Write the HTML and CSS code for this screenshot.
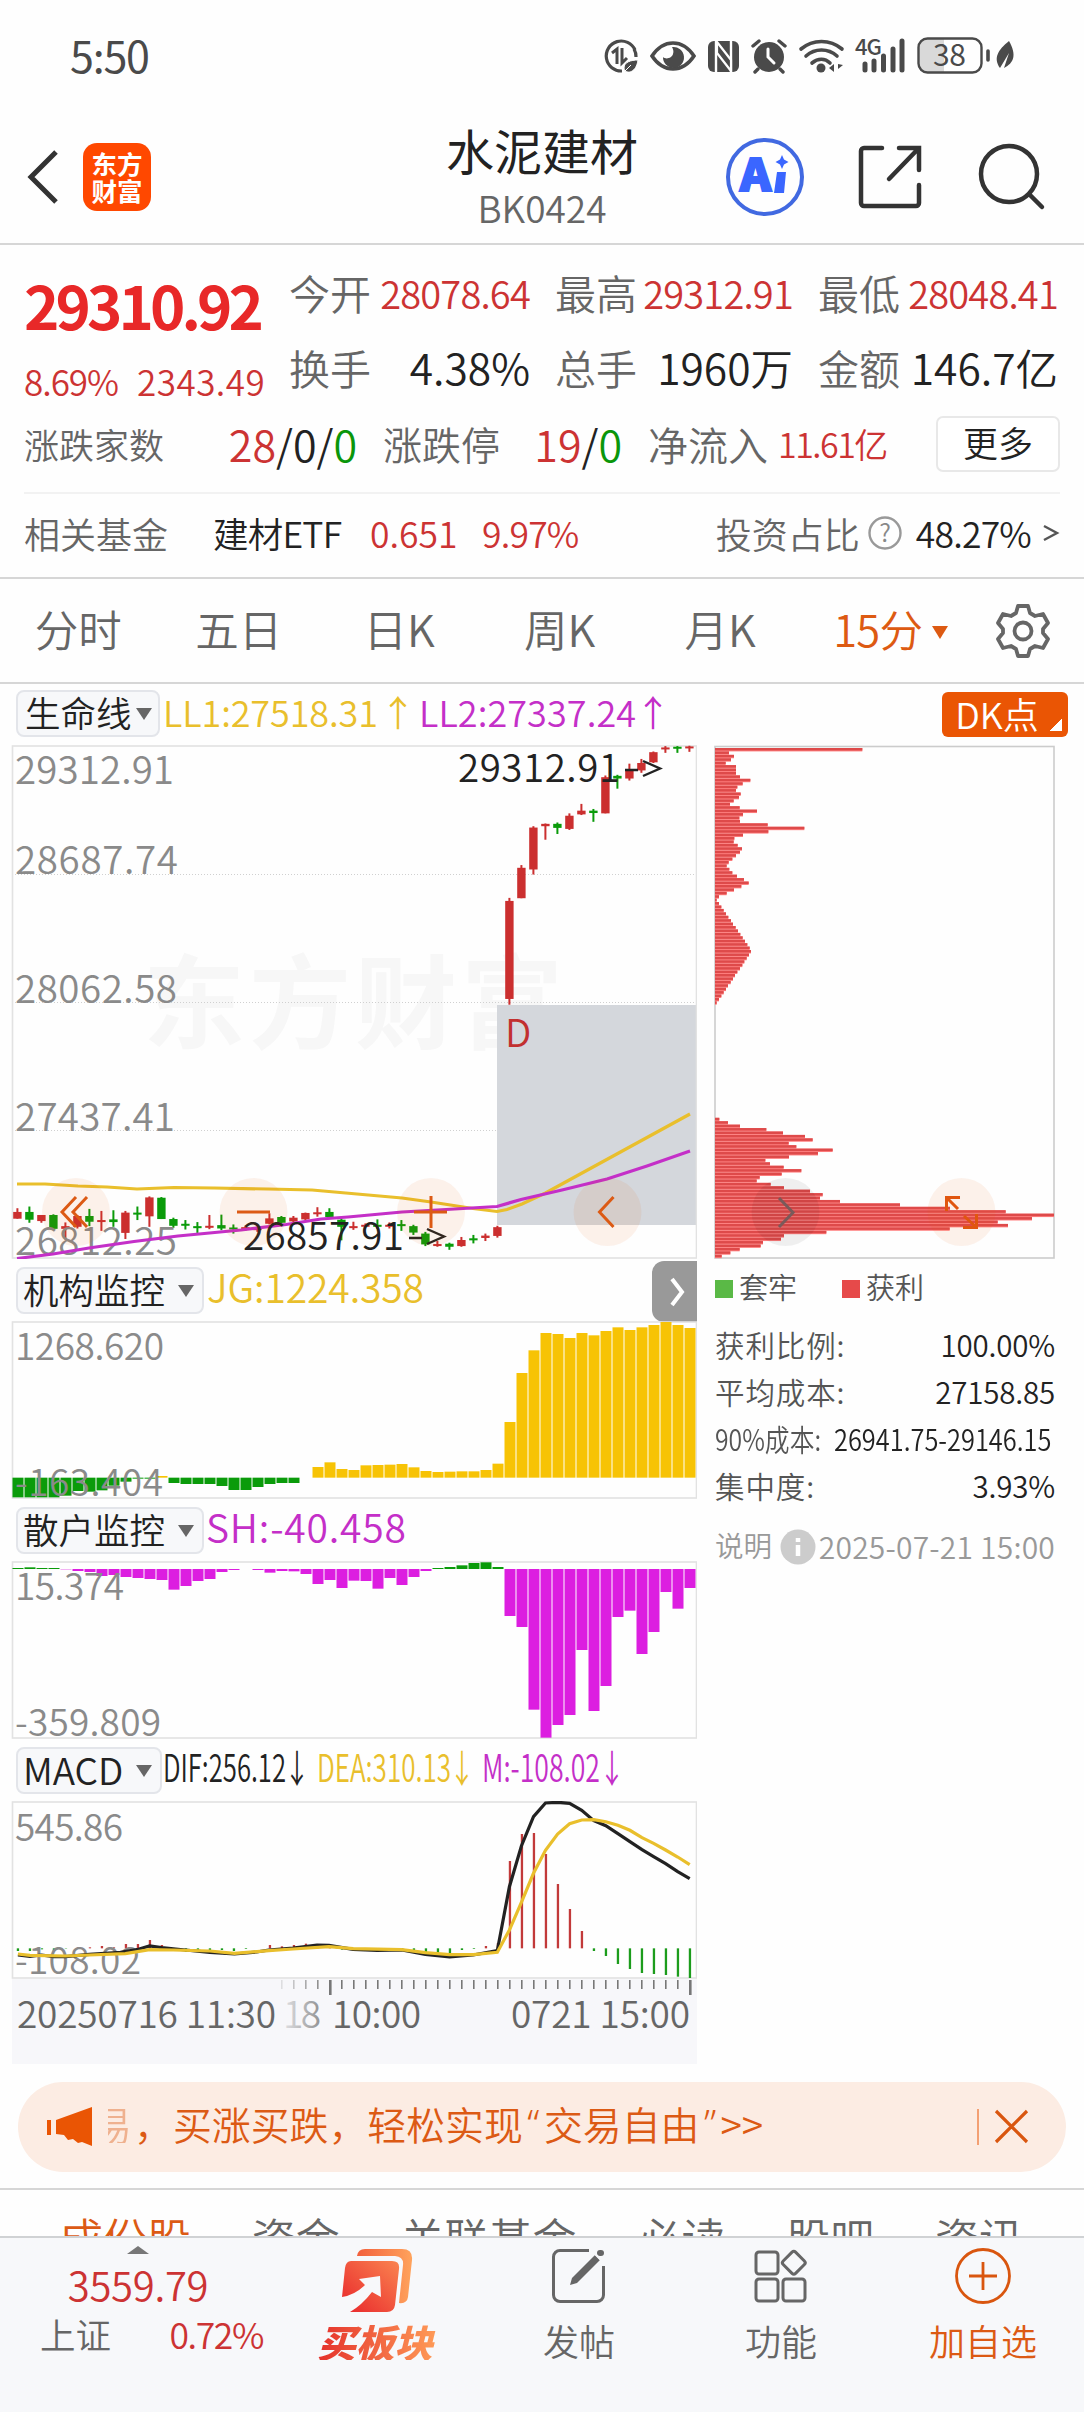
FILE: index.html
```html
<!DOCTYPE html>
<html lang="zh-CN">
<head>
    <meta charset="UTF-8">
    <meta name="viewport" content="width=device-width, initial-scale=1.0">
    <title>水泥建材 BK0424</title>
    <link rel="stylesheet" href="styles.css">
</head>
<body>
<div class="status-bar">
    <span class="time">5:50</span>
    <svg class="status-icons" width="430" height="40" viewBox="600 36 430 40">
        <!-- data saver -->
        <path d="M635 50a15 15 0 1 0-13 21" fill="none" stroke="#4a4a4a" stroke-width="3.2"/>
        <path d="M634 49a15 15 0 0 1 2 8" fill="none" stroke="#4a4a4a" stroke-width="3.2"/>
        <path d="M612 53l5-4v15M622 48v15l5-5" fill="none" stroke="#4a4a4a" stroke-width="3"/>
        <path d="M638 60c-7 0-14 2-14 8 0 6 12 7 14-8zM623 73l8-8" fill="#4a4a4a" stroke="#fff" stroke-width="1"/>
        <!-- eye -->
        <path d="M652 56c6-9 13-13 21-13s15 4 21 13c-6 9-13 13-21 13s-15-4-21-13z" fill="none" stroke="#4a4a4a" stroke-width="3.6"/>
        <path d="M672 47a10.500 10.500 0 1 1-9 10c3 3 9 1 10-3 1-3 0-5-1-7z" fill="#4a4a4a"/>
        <!-- nfc -->
        <rect x="708" y="41" width="31" height="31" rx="6" fill="#4a4a4a"/>
        <path d="M716 41v31M731 41v31" stroke="#fff" stroke-width="2.400"/>
        <path d="M717 42l14 18v11l-14-18z" fill="#4a4a4a" stroke="#fff" stroke-width="2.200"/>
        <!-- alarm -->
        <circle cx="769" cy="57" r="15" fill="#4a4a4a"/>
        <path d="M753 46l6-5M785 46l-6-5M758 69l-3 3M780 69l3 3" stroke="#4a4a4a" stroke-width="3.400" stroke-linecap="round"/>
        <path d="M768 49v8l6 6" fill="none" stroke="#fff" stroke-width="3" stroke-linecap="round"/>
        <!-- wifi -->
        <path d="M801 49c12-10 29-10 41 0M806 56c9-8 22-8 31 0M812 63c6-5 13-5 18 0" fill="none" stroke="#4a4a4a" stroke-width="3.600" stroke-linecap="round"/>
        <circle cx="821" cy="68" r="4.500" fill="#4a4a4a"/>
        <path d="M829 68l5-4v8zM835 64v8M838 64v8M838 69l5-4-5-1z" fill="#4a4a4a"/>
        <!-- signal -->
        <text class="net-type" x="855" y="55">4G</text>
        <path d="M865 64v6M874 61v9M883.500 56v14M893 49v21M902 41v29" stroke="#4a4a4a" stroke-width="5" stroke-linecap="round"/>
        <!-- battery -->
        <path d="M927 39h17v33h-17a8 8 0 0 1-8-8V47a8 8 0 0 1 8-8z" fill="#d9d9d9"/>
        <rect x="918.500" y="38.500" width="63" height="34" rx="9" fill="none" stroke="#4a4a4a" stroke-width="2.400"/>
        <path d="M988 51v9" stroke="#4a4a4a" stroke-width="3.600" stroke-linecap="round"/>
        <text class="battery-text" x="933" y="66" textLength="33">38</text>
        <path d="M1009 41c8 14 5 22-5 27l5-15-9 15c-7-10-2-18 9-27z" fill="#4a4a4a"/>
    </svg>
</div>

<header>
    <div class="header-left">
        <svg width="34" height="60" viewBox="0 0 34 60"><path d="M30 5L5 30l25 25" fill="none" stroke="#333" stroke-width="5"/></svg>
        <div class="logo"><span>东方</span><span>财富</span></div>
    </div>
    <div class="title">
        <h1>水泥建材</h1>
        <p>BK0424</p>
    </div>
    <div class="header-right">
        <svg width="80" height="80" viewBox="0 0 80 80">
            <circle cx="40" cy="40" r="37" fill="none" stroke="#4169e1" stroke-width="4"/>
            <text class="ai-text" x="15" y="54" textLength="31" lengthAdjust="spacingAndGlyphs">A</text>
            <path d="M52 35h9l-2 21h-10zM57 18l2 4.500 4.500 2.500-4.500 2.500L57 32l-2-4.500-4.500-2.500 4.500-2.500z" fill="#3a66ff"/>
        </svg>
        <svg width="68" height="68" viewBox="0 0 68 68">
            <path d="M26 5H8a3 3 0 0 0-3 3v52a3 3 0 0 0 3 3h52a3 3 0 0 0 3-3V42M43 5h20v22M62 6L33 36" fill="none" stroke="#333" stroke-width="4.500" stroke-linecap="round"/>
        </svg>
        <svg width="70" height="70" viewBox="0 0 70 70">
            <circle cx="32" cy="31" r="28" fill="none" stroke="#333" stroke-width="4.500"/>
            <path d="M53 52l12 12" stroke="#333" stroke-width="4.500" stroke-linecap="round"/>
        </svg>
    </div>
</header>

<section class="quote">
    <div class="quote-top">
        <div class="price">
            <div class="last">29310.92</div>
            <div class="change"><span>8.69%</span><span class="amount">2343.49</span></div>
        </div>
        <div class="stats">
            <div class="stat"><label>今开</label><span class="num red">28078.64</span></div>
            <div class="stat"><label>最高</label><span class="num red">29312.91</span></div>
            <div class="stat"><label>最低</label><span class="num red">28048.41</span></div>
            <div class="stat"><label>换手</label><span class="big">4.38%</span></div>
            <div class="stat"><label>总手</label><span class="big">1960万</span></div>
            <div class="stat"><label>金额</label><span class="big">146.7亿</span></div>
        </div>
    </div>
    <div class="breadth">
        <label class="small">涨跌家数</label>
        <span class="counts up-down"><i class="red">28</i>/0/<i class="green">0</i></span>
        <label>涨跌停</label>
        <span class="counts limits"><i class="red">19</i>/<i class="green">0</i></span>
        <label class="flow-label">净流入</label>
        <span class="flow red">11.61亿</span>
        <button class="more-btn">更多</button>
    </div>
    <div class="fund">
        <label>相关基金</label>
        <span class="fund-name">建材ETF</span>
        <span class="fund-num red">0.651</span>
        <span class="fund-pct red">9.97%</span>
        <label class="ratio-label">投资占比</label>
        <svg width="34" height="34" viewBox="0 0 34 34">
            <circle cx="17" cy="17" r="15.500" fill="none" stroke="#999" stroke-width="2.400"/>
            <text class="help-mark" x="17" y="26">?</text>
        </svg>
        <span class="ratio">48.27%</span>
        <svg class="go" width="18" height="20" viewBox="0 0 18 20"><path d="M2 3l13 7-13 7" fill="none" stroke="#555" stroke-width="2.400"/></svg>
    </div>
</section>

<nav class="periods">
    <a>分时</a>
    <a>五日</a>
    <a>日K</a>
    <a>周K</a>
    <a>月K</a>
    <a class="active">15分<span class="caret"></span></a>
    <svg width="56" height="56" viewBox="0 0 56 56">
        <path d="M23 3h10l2 7 5 3 8-2 5 9-5 6v4l5 6-5 9-8-2-5 3-2 7H23l-2-7-5-3-8 2-5-9 5-6v-4l-5-6 5-9 8 2 5-3z" fill="none" stroke="#666" stroke-width="3.800" stroke-linejoin="round"/>
        <circle cx="28" cy="28" r="8.500" fill="none" stroke="#666" stroke-width="3.800"/>
    </svg>
</nav>

<div class="indicator main-indicator">
    <button class="pick short">生命线<span class="caret"></span></button>
    <svg class="readout" width="520" height="46" viewBox="160 690 520 46">
        <text class="yellow" x="163" y="727" textLength="215">LL1:27518.31</text>
        <text class="magenta" x="419" y="727" textLength="217">LL2:27337.24</text>
        <text class="yellow" x="380" y="727">↑</text>
        <text class="magenta" x="635" y="727">↑</text>
    </svg>
    <button class="dk-btn">DK点</button>
</div>

<div class="charts">
    <div class="chart-left">
        <svg id="kline" width="697" height="514" viewBox="0 745 697 514">
            <text class="watermark" x="143" y="1041" textLength="420">东方财富</text>
            <path class="grid" d="M12 874.500H696M12 1002.500H696M12 1130.500H696"/>
            <rect x="497" y="1005" width="199" height="220" fill="#d4d7dc"/>
            <rect class="frame" x="12.500" y="746" width="684" height="512"/>
            <g id="candles"></g>
            <g class="axis">
                <text x="15" y="784" textLength="159">29312.91</text>
                <text x="15" y="874" textLength="163">28687.74</text>
                <text x="15" y="1003" textLength="162">28062.58</text>
                <text x="15" y="1131" textLength="160">27437.41</text>
                <text x="15" y="1255" textLength="162">26812.25</text>
            </g>
            <path class="line yellow-line" d="M17 1184L45 1184 78 1186 107 1187 137 1189 174 1187.500 214 1188 268 1189 312 1190 357 1194 402 1198 431 1202 473 1208.500 497 1211.500 507 1209.500 522 1204 545.500 1193 690 1114"/>
            <path class="line magenta-line" d="M17 1258.500L53 1254 89 1248 134 1241.500 178 1236 241 1230 286 1224.500 321 1219 348 1217 402 1212 446 1209.500 497 1206.500 521 1199.500 562 1190 607 1179 647 1166 690 1151"/>
            <text class="mark-d" x="505" y="1047">D</text>
            <g class="extreme">
                <text x="458" y="782" textLength="162">29312.91</text>
                <path d="M625 770h13M643 761l17 7.500-17 7.500"/>
                <text x="243" y="1250" textLength="161">26857.91</text>
                <path d="M409 1238h13M427 1229l17 7.500-17 7.500"/>
            </g>
            <g class="tool">
                <circle cx="76" cy="1212" r="34"/>
                <circle cx="253.500" cy="1212" r="34"/>
                <circle cx="431" cy="1212" r="34"/>
                <circle cx="607.500" cy="1212" r="34"/>
                <path d="M76 1197l-14 15 14 15M87 1197l-14 15 14 15M237 1212h33M414 1212h33M431 1196v32M613.500 1197l-14 15 14 15"/>
            </g>
        </svg>

        <div class="indicator">
            <button class="pick">机构监控<span class="caret"></span></button>
            <svg class="readout" width="400" height="46" viewBox="205 1268 400 46">
                <text class="yellow big-read" x="208" y="1304" textLength="217">JG:1224.358</text>
            </svg>
            <button class="collapse">
                <svg width="20" height="34" viewBox="0 0 20 34"><path d="M4 4l10 13L4 30" fill="none" stroke="#fff" stroke-width="4"/></svg>
            </button>
        </div>
        <svg width="697" height="178" viewBox="0 1321 697 178">
            <rect class="frame" x="12.500" y="1322" width="684" height="176"/>
            <g id="org-bars"></g>
            <g class="axis sub">
                <text x="15" y="1360" textLength="149">1268.620</text>
                <text x="15" y="1496" textLength="148">-163.404</text>
            </g>
        </svg>

        <div class="indicator">
            <button class="pick">散户监控<span class="caret"></span></button>
            <svg class="readout" width="400" height="46" viewBox="205 1508 400 46">
                <text class="magenta big-read" x="207" y="1544" textLength="200">SH:-40.458</text>
            </svg>
        </div>
        <svg width="697" height="178" viewBox="0 1561 697 178">
            <rect class="frame" x="12.500" y="1562" width="684" height="176"/>
            <g id="retail-bars"></g>
            <g class="axis sub">
                <text x="15" y="1600" textLength="109">15.374</text>
                <text x="15" y="1736" textLength="146">-359.809</text>
            </g>
        </svg>

        <div class="indicator">
            <button class="pick macd">MACD<span class="caret"></span></button>
            <svg class="readout" width="500" height="46" viewBox="164 1748 500 46">
                <text class="black tight" x="165" y="1783" textLength="123" lengthAdjust="spacingAndGlyphs">DIF:256.12</text>
                <text class="yellow tight" x="319" y="1783" textLength="134" lengthAdjust="spacingAndGlyphs">DEA:310.13</text>
                <text class="magenta tight" x="484" y="1783" textLength="118" lengthAdjust="spacingAndGlyphs">M:-108.02</text>
                <text class="black tight" x="286" y="1783" textLength="26" lengthAdjust="spacingAndGlyphs">↓</text>
                <text class="yellow tight" x="451" y="1783" textLength="26" lengthAdjust="spacingAndGlyphs">↓</text>
                <text class="magenta tight" x="601" y="1783" textLength="26" lengthAdjust="spacingAndGlyphs">↓</text>
            </svg>
        </div>
        <svg width="697" height="263" viewBox="0 1801 697 263">
            <defs>
                <linearGradient id="fade" x1="0" x2="1" y1="0" y2="0">
                    <stop offset="0" stop-color="#666" stop-opacity=".15"/>
                    <stop offset="1" stop-color="#666" stop-opacity=".7"/>
                </linearGradient>
            </defs>
            <rect x="12" y="1979" width="685" height="85" fill="#f7f7fa"/>
            <rect class="frame" x="12.500" y="1802" width="684" height="176"/>
            <g id="macd-bars"></g>
            <g class="axis sub">
                <text x="15" y="1841" textLength="108">545.86</text>
                <text x="15" y="1974" textLength="126">-108.02</text>
            </g>
            <polyline class="line" id="dif-line" stroke="#222"/>
            <polyline class="line yellow-line" id="dea-line"/>
            <g id="ticks"></g>
            <g class="dates">
                <text x="17" y="2028" textLength="259">20250716 11:30</text>
                <text x="283" y="2028" textLength="38" fill="url(#fade)">18</text>
                <text x="332" y="2028" textLength="89">10:00</text>
                <text x="511" y="2028" textLength="179">0721 15:00</text>
            </g>
        </svg>
    </div>

    <div class="chart-right">
        <svg width="370" height="514" viewBox="697 745 370 514">
            <rect x="715" y="746.500" width="339" height="511.500" fill="none" stroke="#ccc" stroke-width="1.600"/>
            <g id="chips"></g>
            <circle cx="785.500" cy="1212" r="34" fill="#000" fill-opacity=".06"/>
            <circle cx="961.500" cy="1212" r="34" fill="#ea5504" fill-opacity=".08"/>
            <path d="M779 1198l14 14.500-14 14.500" fill="none" stroke="#7a5a5a" stroke-width="3"/>
            <path d="M960 1197.500H946.500V1211M947 1198l11 11M963 1227.500h13.500V1214M976 1227l-12-11" fill="none" stroke="#e0560f" stroke-width="3"/>
        </svg>
        <div class="legend">
            <i class="trapped"></i><span>套牢</span>
            <i class="profit"></i><span>获利</span>
        </div>
        <div class="chip-row"><label>获利比例:</label><b>100.00%</b></div>
        <div class="chip-row"><label>平均成本:</label><b>27158.85</b></div>
        <div class="chip-row narrow"><label>90%成本:</label><b>26941.75-29146.15</b></div>
        <div class="chip-row"><label>集中度:</label><b>3.93%</b></div>
        <div class="chip-note">
            <span>说明</span>
            <svg width="36" height="36" viewBox="0 0 36 36">
                <circle cx="18" cy="18" r="17.500" fill="#ccc"/>
                <path d="M18 9v4M18 16v11" stroke="#fff" stroke-width="4.500"/>
            </svg>
            <span class="date">2025-07-21 15:00</span>
        </div>
    </div>
</div>

<div class="promo">
    <svg width="46" height="40" viewBox="0 0 46 40"><path d="M0 13h4v15H0zM9 13L45 0v39l-10-4-4 1-5-4-5 1-4-5-8-1z" fill="#ea5504"/></svg>
    <p><span class="fading">易</span><span class="comma">，</span>买涨买跌，轻松实现<span class="q">“</span>交易自由<span class="q">”</span>&gt;&gt;</p>
    <svg class="close" width="54" height="40" viewBox="0 0 54 40">
        <path d="M1 2v36" stroke="#ea5504" stroke-width="1"/>
        <path d="M19 4l31 31M50 4L19 35" stroke="#d9560f" stroke-width="3.200"/>
    </svg>
</div>

<div class="sections">
    <a class="active">成份股</a>
    <a>资金</a>
    <a>关联基金</a>
    <a>必读</a>
    <a>股吧</a>
    <a>资讯</a>
</div>

<footer>
    <div class="index">
        <span class="arrow-up"></span>
        <div class="index-value">3559.79</div>
        <div class="index-row"><span>上证</span><span class="index-pct">0.72%</span></div>
    </div>
    <div class="item buy">
        <svg width="72" height="66" viewBox="0 0 72 66">
            <defs>
                <linearGradient id="buy" x1="0" y1="1" x2="1" y2="0">
                    <stop offset="0" stop-color="#e8262b"/>
                    <stop offset="1" stop-color="#fa8450"/>
                </linearGradient>
                <linearGradient id="buyBack" x1="0" y1="0" x2="1" y2="0">
                    <stop offset="0" stop-color="#f2603c"/>
                    <stop offset="1" stop-color="#ffa35c"/>
                </linearGradient>
            </defs>
            <path d="M16 8q1-7 8-7h37q11 0 10 11l-4 37q-1 7-9 6l4-38q1-8-8-9z" fill="url(#buyBack)"/>
            <path d="M10 13h41q8 0 7 8l-4 36q-1 7-8 7H9q12-7 22-20l9 5 -1-21-21 3 6 6Q14 47 1 49l3-29q1-7 6-7z" fill="url(#buy)"/>
        </svg>
        <span>买板块</span>
    </div>
    <div class="item">
        <svg width="56" height="56" viewBox="0 0 56 56">
            <path d="M38 2.500H9A6.500 6.500 0 0 0 2.500 9v38A6.500 6.500 0 0 0 9 53.500h37a6.500 6.500 0 0 0 6.500-6.500V18" fill="none" stroke="#666" stroke-width="3"/>
            <path d="M49 5l1 0" stroke="#666" stroke-width="6" stroke-linecap="round"/>
            <path d="M19 37l2-7 23-23 5 5-23 23z" fill="#666"/>
            <path d="M43 5l7 7" stroke="#f7f8fa" stroke-width="2"/>
        </svg>
        <span>发帖</span>
    </div>
    <div class="item">
        <svg width="56" height="56" viewBox="0 0 56 56" fill="none" stroke="#666" stroke-width="3">
            <rect x="3" y="4" width="22" height="22" rx="3"/>
            <rect x="3" y="31" width="22" height="22" rx="3"/>
            <rect x="30" y="31" width="22" height="22" rx="3"/>
            <rect x="32" y="6" width="17.500" height="17.500" rx="2.500" transform="rotate(45 40.800 14.800)"/>
        </svg>
        <span>功能</span>
    </div>
    <div class="item add">
        <svg width="58" height="58" viewBox="0 0 58 58" fill="none" stroke="#d9560f" stroke-width="2.800">
            <circle cx="29" cy="28" r="26.500"/>
            <path d="M15 28h28M29 14v28"/>
        </svg>
        <span>加自选</span>
    </div>
</footer>

<script src="script.js"></script>
</body>
</html>
```
FILE: styles.css
```css
* {
    box-sizing: border-box;
}
body {
    margin: 0;
    width: 1084px;
    height: 2412px;
    overflow: hidden;
    background-color: #fefefe;
    color: #222;
    font-family: "Noto Sans CJK SC", "Noto Sans", sans-serif;
    font-weight: 350;
    line-height: 1;
}
svg {
    display: block;
    flex: none;
}
svg text {
    font-family: "Noto Sans CJK SC", sans-serif;
}
i {
    font-style: normal;
}
a, span, label {
    white-space: nowrap;
}
button {
    font-family: inherit;
    font-weight: inherit;
    line-height: 1;
    padding: 0;
    margin: 0;
    border: none;
}
.red { color: #cc3333; }
.green { color: #0a960a; }

/* status bar */
.status-bar {
    height: 115px;
    padding: 33px 54px 0 70px;
    display: flex;
    justify-content: space-between;
}
.time {
    font-size: 43px;
    font-weight: 400;
    letter-spacing: -1.2px;
    color: #4a4a4a;
}
.status-icons {
    margin-top: 3px;
}
.net-type {
    font-size: 22px;
    font-weight: 500;
    fill: #4a4a4a;
    letter-spacing: -1px;
}
.battery-text {
    font-size: 30px;
    font-weight: 400;
    fill: #4a4a4a;
}

/* header */
header {
    height: 130px;
    border-bottom: 2px solid #d6d6d6;
    display: flex;
    justify-content: space-between;
}
.header-left {
    width: 360px;
    padding: 28px 0 0 26px;
    display: flex;
}
.header-left svg {
    margin-top: 4px;
}
.logo {
    margin-left: 23px;
    width: 68px;
    height: 68px;
    border-radius: 14px;
    background-color: #ff4800;
    color: #fff;
    font-size: 25.500px;
    font-weight: 700;
    display: flex;
    flex-direction: column;
    align-items: center;
    justify-content: center;
    gap: 2px;
    padding-bottom: 2px;
}
.title {
    text-align: center;
}
.title h1 {
    margin: 10px 0 0;
    font-size: 48px;
    font-weight: 400;
}
.title p {
    margin: 16px 0 0;
    font-size: 37px;
    color: #666;
}
.header-right {
    width: 360px;
    padding: 22px 37px 0 0;
    display: flex;
    justify-content: flex-end;
}
.header-right svg:nth-child(2) {
    margin: 6px 0 0 51px;
}
.header-right svg:nth-child(3) {
    margin: 6px 0 0 53px;
}
.ai-text {
    font-size: 44px;
    font-weight: 900;
    fill: #3a66ff;
    stroke: #3a66ff;
    stroke-width: 2;
}

/* quote */
.quote {
    height: 334px;
    padding: 12px 24px 0 24px;
    border-bottom: 2px solid #d6d6d6;
}
.quote-top {
    height: 150px;
    display: flex;
}
.price {
    width: 265px;
    color: #cc3333;
}
.last {
    margin-top: 17px;
    font-size: 60px;
    font-weight: 700;
    letter-spacing: -3.9px;
    color: #e82828;
}
.change {
    margin-top: 29px;
    font-size: 35px;
    letter-spacing: -1px;
    display: flex;
}
.change span {
    width: 113px;
}
.change .amount {
    letter-spacing: .5px;
}
.stats {
    display: grid;
    grid-template-columns: 241px 238px 240px;
    grid-template-rows: 75px 75px;
    column-gap: 25px;
}
.stat {
    display: flex;
    justify-content: space-between;
    align-items: center;
    padding-bottom: 4px;
}
.stat label,
.breadth label {
    font-size: 41px;
    color: #666;
}
.stat .num {
    font-size: 38px;
    letter-spacing: -.8px;
}
.stat .big {
    font-size: 42.500px;
}
.breadth {
    height: 87px;
    border-bottom: 2px solid #f2f2f2;
    display: flex;
    align-items: center;
    padding-bottom: 12px;
}
.breadth .small {
    font-size: 35px;
}
.breadth label:nth-of-type(2) {
    font-size: 39px;
}
.breadth .flow-label {
    font-size: 40px;
    width: 130px;
}
.counts {
    font-size: 43px;
    text-align: right;
}
.up-down {
    width: 193px;
    margin-right: 26px;
}
.limits {
    width: 122px;
    margin-right: 26px;
}
.flow {
    font-size: 34px;
    letter-spacing: -1.5px;
}
.more-btn {
    margin-left: auto;
    width: 124px;
    height: 56px;
    border: 2px solid #e8e8e8;
    border-radius: 7px;
    background-color: #fff;
    color: #222;
    font-size: 35px;
    padding-bottom: 4px;
}
.fund {
    height: 78px;
    display: flex;
    align-items: center;
    font-size: 35.500px;
}
.fund label {
    color: #666;
    font-size: 36px;
}
.fund-name {
    margin-left: 45px;
    width: 157px;
    letter-spacing: -.8px;
}
.fund-num {
    width: 112px;
}
.fund-pct {
    letter-spacing: -.8px;
}
.ratio-label {
    margin-left: auto;
    margin-right: 8px;
}
.help-mark {
    font-size: 25px;
    text-anchor: middle;
    fill: #888;
}
.ratio {
    margin-left: 14px;
    letter-spacing: -.8px;
}
.go {
    margin-left: 11px;
}

/* period tabs */
.periods {
    height: 105px;
    border-bottom: 2px solid #d6d6d6;
    display: flex;
    align-items: center;
}
.periods a {
    width: 160.500px;
    text-align: center;
    font-size: 43.500px;
    color: #666;
    padding-right: 4px;
    padding-bottom: 4px;
}
.periods .active {
    color: #dd5a12;
    padding-left: 20px;
    letter-spacing: -.7px;
}
.periods svg {
    margin-left: 32px;
}
.caret {
    display: inline-block;
    border: 8px solid transparent;
    border-top: 13px solid #666;
    border-bottom: none;
}
.active .caret {
    border-top-color: #dd5a12;
    margin: 0 0 8px 10px;
}

/* indicator bars */
.indicator {
    height: 62px;
    padding: 8px 0 0 16px;
    display: flex;
}
.main-indicator {
    height: 61px;
    padding-top: 6px;
}
.pick {
    width: 188px;
    height: 47px;
    border: 2px solid #e3e5ea;
    border-radius: 8px;
    background-color: #f7f8fa;
    color: #222;
    font-size: 35.500px;
    padding: 0 8px 3px 5px;
    display: flex;
    align-items: center;
    justify-content: space-between;
}
.pick .caret {
    margin-top: 4px;
    border-top-width: 12px;
}
.pick.short {
    width: 144px;
    padding-left: 7px;
    padding-right: 6px;
}
.pick.macd {
    width: 146px;
    font-size: 37px;
}
.readout text {
    font-size: 36px;
}
.readout .big-read {
    font-size: 39px;
}
.readout .tight {
    font-size: 38px;
}
.readout .yellow { fill: #e9bf2c; }
.readout .magenta { fill: #c42fc8; }
.readout .black { fill: #222; }
.dk-btn {
    margin-left: auto;
    margin-right: 16px;
    width: 126px;
    height: 45px;
    border-radius: 6px;
    color: #fff;
    font-size: 36px;
    padding: 0 16px 4px 0;
    margin-top: 2px;
    background: linear-gradient(135deg, transparent 50%, #fff 50%) no-repeat right 6px bottom 6px / 12px 12px #ea5504;
}
.collapse {
    margin: -6px 0 0 auto;
    width: 45px;
    height: 61px;
    padding-left: 14px;
    border-radius: 12px 0 0 12px;
    background-color: #999;
}
.collapse svg {
    margin-left: 2px;
}

/* charts */
.charts {
    display: flex;
    height: 1319px;
}
.chart-left {
    width: 697px;
}
.watermark {
    font-size: 102px;
    font-weight: 700;
    fill: #f7f7f7;
}
.grid {
    stroke: #d0d0d0;
    stroke-width: 1;
    stroke-dasharray: 1 2;
}
.frame {
    fill: none;
    stroke: #e2e2e2;
    stroke-width: 1.600;
}
.axis text {
    font-size: 38.500px;
    fill: #8a8a8a;
}
.axis.sub text {
    font-size: 37px;
}
.dates text {
    font-size: 37px;
    fill: #666;
}
.dates text[fill] {
    fill: url(#fade);
}
.line {
    fill: none;
    stroke-width: 3.200;
}
.yellow-line { stroke: #e9bf2c; }
.magenta-line { stroke: #c42fc8; }
.mark-d {
    font-size: 38.500px;
    fill: #c23030;
}
.extreme text {
    font-size: 38.500px;
    fill: #222;
}
.extreme path {
    fill: none;
    stroke: #222;
    stroke-width: 2.400;
}
.tool circle {
    fill: #ea5504;
    fill-opacity: .08;
}
.tool path {
    fill: none;
    stroke: #dc5a14;
    stroke-width: 3;
}

/* chip distribution */
.chart-right {
    width: 370px;
}
.legend {
    height: 64px;
    padding: 13px 0 0 18px;
    display: flex;
    align-items: flex-start;
    font-size: 29px;
    color: #555;
}
.legend i {
    width: 18px;
    height: 18px;
    margin: 8px 6px 0 0;
}
.legend span {
    width: 103px;
}
.trapped { background-color: #5ab946; }
.profit { background-color: #e64a4a; }
.chip-row {
    height: 47px;
    padding: 0 12px 4px 18px;
    display: flex;
    justify-content: space-between;
    align-items: center;
    font-size: 29.500px;
}
.chip-row label {
    color: #555;
    letter-spacing: .9px;
}
.chip-row b {
    font-weight: inherit;
    white-space: nowrap;
    letter-spacing: -.2px;
}
.narrow label {
    width: 104px;
    letter-spacing: 0;
    transform: scaleX(.84);
    transform-origin: left;
}
.narrow b {
    letter-spacing: 0;
    width: 221px;
    transform: scaleX(.86);
    transform-origin: left;
}
.chip-note {
    margin-top: 13px;
    height: 46px;
    padding: 0 12px 0 18px;
    display: flex;
    align-items: center;
    font-size: 28.500px;
    color: #999;
}
.chip-note svg {
    margin: 0 0 0 8px;
}
.chip-note .date {
    margin-left: auto;
    font-size: 30px;
    letter-spacing: .2px;
}
.chip-note span {
    padding-bottom: 3px;
}

/* promo */
.promo {
    margin: 18px 18px 0;
    height: 90px;
    border-radius: 45px;
    background-color: #fcece3;
    padding: 0 35px 0 29px;
    display: flex;
    align-items: center;
    color: #dc5a14;
}
.promo p {
    margin: -7px 0 0 4px;
    font-size: 38.900px;
    display: flex;
}
.fading {
    margin-left: 11px;
    width: 24px;
    direction: rtl;
    overflow: hidden;
    opacity: .4;
}
.comma {
    margin-left: 2px;
}
.promo .q {
    font-family: "Noto Sans", sans-serif;
    width: 21px;
    text-align: center;
}
.close {
    margin-left: auto;
}

/* section tabs, cut off by the footer */
.sections {
    margin-top: 16px;
    height: 48px;
    padding: 25px 0 0 59px;
    border-top: 2px solid #d6d6d6;
    overflow: hidden;
    display: flex;
    gap: 60.800px;
    font-size: 44px;
    color: #666;
}
.sections .active {
    color: #dc5a14;
}

/* footer */
footer {
    height: 176px;
    border-top: 2px solid #d0d2d4;
    background-color: #f7f8fa;
    display: flex;
}
.index {
    width: 276px;
    display: flex;
    flex-direction: column;
    align-items: center;
    color: #cc3333;
}
.arrow-up {
    margin-top: 8px;
    border: 11px solid transparent;
    border-bottom: 8px solid #777;
    border-top: none;
}
.index-value {
    margin-top: 10px;
    font-size: 40px;
    letter-spacing: -.3px;
}
.index-row {
    width: 223px;
    margin: 12px 0 0 40px;
    align-self: flex-start;
    display: flex;
    justify-content: space-between;
    align-items: center;
    font-size: 35.500px;
    color: #666;
}
.index-pct {
    color: #cc3333;
    letter-spacing: -1.400px;
}
.item {
    width: 202px;
    padding-top: 10px;
    display: flex;
    flex-direction: column;
    align-items: center;
    font-size: 36px;
    color: #666;
}
.item span {
    margin-top: auto;
    margin-bottom: 54px;
}
.buy span {
    font-size: 38.500px;
    font-weight: 900;
    font-style: italic;
    padding: 0 6px 0 2px;
    margin-bottom: 52px;
    background: linear-gradient(90deg, #e42f2a, #ff9d58);
    -webkit-background-clip: text;
    background-clip: text;
    color: transparent;
}
.add {
    color: #dc5a14;
}
```
FILE: script.js
```js
const RED = '#cb2f2f';
const GREEN = '#0a9b0a';
const STEP = 12;

// [color, high, top, bottom, low] in chart units
const candles = [
    ['r',1385,1396,1416,1416],['g',1380,1396,1419,1428],['r',1405,1405,1423,1428],['g',1403,1405,1446,1446],
    ['r',1427,1438,1446,1478],['r',1405,1408,1440,1445],['g',1387,1408,1425,1438],['r',1393,1420,1424,1452],
    ['g',1391,1418,1426,1440],['r',1393,1398,1458,1476],['g',1380,1398,1402,1420],['r',1350,1353,1409,1440],
    ['g',1352,1354,1417,1417],['g',1413,1417,1437,1443],['g',1420,1431,1435,1448],['g',1426,1438,1444,1458],
    ['r',1405,1437,1441,1447],['g',1404,1435,1445,1450],['g',1433,1442,1446,1460],['r',1437,1441,1446,1452],
    ['r',1440,1444,1448,1455],['r',1400,1415,1431,1433],['g',1408,1411,1428,1430],['r',1408,1413,1424,1427],
    ['r',1398,1399,1418,1420],['r',1382,1397,1400,1410],['g',1385,1396,1411,1416],['g',1417,1419,1440,1480],
    ['r',1425,1438,1442,1449],['r',1430,1434,1438,1440],['g',1418,1434,1440,1446],['r',1427,1434,1437,1445],
    ['g',1420,1432,1438,1452],['g',1434,1438,1457,1464],['g',1455,1460,1492,1497],['r',1482,1491,1495,1499],
    ['g',1487,1490,1499,1508],['r',1470,1479,1497,1499],['g',1464,1474,1480,1489],['r',1460,1466,1473,1482],
    ['r',1437,1441,1467,1472],['r',467,476,766,783],['r',370,378,468,468],['r',255,259,383,398],
    ['r',247,248,255,295],['g',244,248,260,278],['r',217,224,263,266],['r',189,209,220,222],
    ['g',204,209,216,242],['r',105,110,217,217],['g',103,106,114,144],['r',70,88,114,120],
    ['r',56,68,90,97],['r',34,36,66,68],['r',18,22,27,38],['g',18,20,24,38],['r',17,19,24,35]
];

const org = [742,742,742,742,737,723,725,721,707,695,686,686,678,699,702,702,702,708,720,720,711,702,699,699,683,
    651,637,657,660,646,645,644,642,652,663,666,665,664,664,660,641,516,369,301,249,252,264,249,256,243,232,240,
    232,225,216,225,234];

const retail = [204,202,204,204,208,213,216,228,225,231,234,237,240,269,258,243,237,216,210,207,210,218,213,214,
    222,252,240,264,242,243,266,234,255,231,213,204,201,196,189,187,201,348,381,629,713,675,645,450,633,558,351,
    332,462,396,276,326,264];

const macd = [633,633,628,633,626,622,622,618,622,612,612,600,615,625,636,636,633,630,633,627,625,615,619,615,611,
    615,617,629,630,628,632,630,630,633,639,640,640,630,627,618,609,363,282,279,342,432,507,573,633,648,672,687,
    699,702,705,710,714];

const dif = [[40,645],[67,649],[93,645],[120,650],[147,650],[200,643],[270,637],[310,628],[335,618],[362,623],
    [415,630],[470,637],[525,642],[575,636],[602,630],[656,624],[710,615],[737,616],[791,628],[845,631],[900,630],
    [953,643],[1007,651],[1060,645],[1114,632],[1141,440],[1168,318],[1195,230],[1222,189],[1249,187],[1276,190],
    [1303,211],[1330,242],[1357,257],[1384,281],[1411,305],[1438,329],[1464,350],[1491,371],[1518,395],[1545,416]];

const dea = [[40,642],[67,646],[147,648],[200,645],[281,641],[335,629],[388,630],[470,633],[525,640],[602,632],
    [656,627],[737,620],[791,626],[900,629],[953,638],[1007,644],[1060,644],[1114,637],[1141,570],[1168,487],
    [1195,400],[1222,331],[1249,282],[1276,251],[1303,240],[1330,239],[1357,245],[1384,256],[1411,271],[1438,293],
    [1464,310],[1491,330],[1518,351],[1545,374]];

const chips = [517,117,132,123,107,138,138,138,150,181,158,142,138,152,147,131,120,149,201,159,148,150,233,343,
    235,159,133,131,143,156,150,138,127,116,110,118,127,141,162,176,154,132,110,87,80,87,94,101,108,115,123,129,
    137,144,151,158,165,172,179,183,177,170,163,157,150,142,135,129,122,114,108,101,94,87,80]
    .concat(new Array(33).fill(75),
    [88,114,150,229,279,345,368,296,319,428,384,297,226,240,281,334,275,209,200,242,282,360,398,390,450,630,780,
    947,1092,1026,923,954,779,409,282,273,219,212,149,121,95]);

function rect(x, y, w, h, color) {
    return `<rect x="${x}" y="${y}" width="${w}" height="${h}" fill="${color}"/>`;
}

function draw(id, html) {
    document.getElementById(id).innerHTML = html;
}

const py = v => 740 + v / 2.958;
draw('candles', candles.map(([c, hi, top, bot, lo], i) => {
    const x = 17.4 + i * STEP;
    const color = c === 'r' ? RED : GREEN;
    return rect(x - 1, py(hi), 2, py(lo) - py(hi), color) +
        rect(x - 4.2, py(top), 8.4, Math.max(2, py(bot) - py(top)), color);
}).join(''));

// Bars around a zero line
function bars(id, data, base, zero, up, down, x0, w) {
    draw(id, data.map((v, i) => {
        const h = Math.abs(v - zero) / 3;
        return rect(x0 + i * STEP, base + Math.min(v, zero) / 3, w, h, v < zero ? up : down);
    }).join(''));
}
bars('org-bars', org, 1250, 683, '#f7c305', GREEN, 12.5, 11);
bars('retail-bars', retail, 1500, 207, GREEN, '#dc1ee0', 12.5, 11);
bars('macd-bars', macd, 1740, 625, '#c23a3a', '#1c9c1c', 16.8, 2.3);

const toPoints = a => a.map(([x, y]) => `${(x / 2.24).toFixed(1)},${(1740 + y / 3).toFixed(1)}`).join(' ');
document.getElementById('dif-line').setAttribute('points', toPoints(dif));
document.getElementById('dea-line').setAttribute('points', toPoints(dea));

// Time axis ticks, the first few fade in
let ticks = '';
for (let i = 0; i < 35; i++) {
    const big = i === 4 || i === 34;
    const op = i < 4 ? 0.2 + i * 0.2 : 1;
    ticks += `<rect x="${281 + i * STEP}" y="1980" width="${big ? 2.6 : 1.6}" height="${big ? 15 : 9}" fill="#777" fill-opacity="${op}"/>`;
}
draw('ticks', ticks);

draw('chips', chips.map((v, i) => {
    const y = 748 + i * 3.424;
    const w = (v - 75) / 3;
    return rect(715, y, w, 3.424, '#ff8080') + rect(715, y, w, 2.5, '#de4a4a');
}).join(''));
```
